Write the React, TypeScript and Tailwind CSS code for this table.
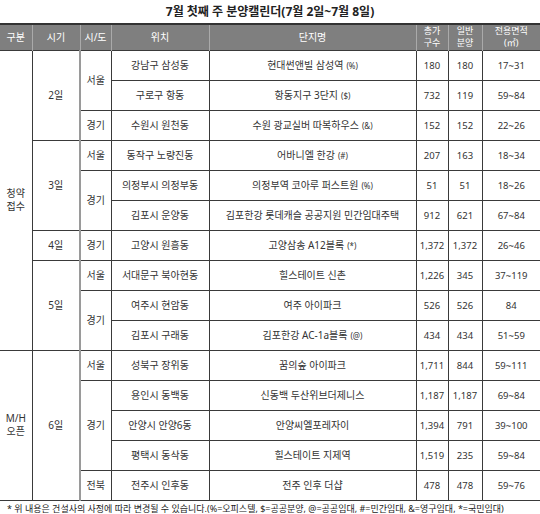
import React from 'react';

type Span = [string, number];

type Row = {
  g?: Span;
  d?: Span;
  r?: Span;
  loc: string;
  name: string;
  mark?: string;
  total: string;
  sale: string;
  area: string;
};

const rows: Row[] = [
  { g: ['청약|접수', 10], d: ['2일', 3], r: ['서울', 2], loc: '강남구 삼성동', name: '현대썬앤빌 삼성역', mark: '(%)', total: '180', sale: '180', area: '17~31' },
  { loc: '구로구 항동', name: '항동지구 3단지', mark: '($)', total: '732', sale: '119', area: '59~84' },
  { r: ['경기', 1], loc: '수원시 원천동', name: '수원 광교실버 따복하우스', mark: '(&)', total: '152', sale: '152', area: '22~26' },
  { d: ['3일', 3], r: ['서울', 1], loc: '동작구 노량진동', name: '어바니엘 한강', mark: '(#)', total: '207', sale: '163', area: '18~34' },
  { r: ['경기', 2], loc: '의정부시 의정부동', name: '의정부역 코아루 퍼스트원', mark: '(%)', total: '51', sale: '51', area: '18~26' },
  { loc: '김포시 운양동', name: '김포한강 롯데캐슬 공공지원 민간임대주택', total: '912', sale: '621', area: '67~84' },
  { d: ['4일', 1], r: ['경기', 1], loc: '고양시 원흥동', name: '고양삼송 A12블록', mark: '(*)', total: '1,372', sale: '1,372', area: '26~46' },
  { d: ['5일', 3], r: ['서울', 1], loc: '서대문구 북아현동', name: '힐스테이트 신촌', total: '1,226', sale: '345', area: '37~119' },
  { r: ['경기', 2], loc: '여주시 현암동', name: '여주 아이파크', total: '526', sale: '526', area: '84' },
  { loc: '김포시 구래동', name: '김포한강 AC-1a블록', mark: '(@)', total: '434', sale: '434', area: '51~59' },
  { g: ['M/H|오픈', 5], d: ['6일', 5], r: ['서울', 1], loc: '성북구 장위동', name: '꿈의숲 아이파크', total: '1,711', sale: '844', area: '59~111' },
  { r: ['경기', 3], loc: '용인시 동백동', name: '신동백 두산위브더제니스', total: '1,187', sale: '1,187', area: '69~84' },
  { loc: '안양시 안양6동', name: '안양씨엘포레자이', total: '1,394', sale: '791', area: '39~100' },
  { loc: '평택시 동삭동', name: '힐스테이트 지제역', total: '1,519', sale: '235', area: '59~84' },
  { r: ['전북', 1], loc: '전주시 인후동', name: '전주 인후 더샵', total: '478', sale: '478', area: '59~76' },
];

const cell = 'border border-[#3a3a3a] text-center align-middle p-0';

const Lines: React.FC<{ text: string }> = ({ text }) => (
  <>
    {text.split('|').map((t) => (
      <div key={t}>{t}</div>
    ))}
  </>
);

export default function App() {
  return (
    <div
      className="w-[540px] h-[514px] bg-white text-[#333] overflow-hidden"
      style={{ fontFamily: '"Noto Sans", "Noto Sans CJK KR", sans-serif' }}
    >
      <div className="h-[23px] flex items-center justify-center text-[12px] font-bold text-[#222] pt-[1px]">
        7월 첫째 주 분양캘린더(7월 2일~7월 8일)
      </div>

      <table className="w-[540px] table-fixed border-collapse text-[10px] leading-[13px]">
        <colgroup>
          <col className="w-[32px]" />
          <col className="w-[48px]" />
          <col className="w-[31px]" />
          <col className="w-[98px]" />
          <col className="w-[207px]" />
          <col className="w-[32px]" />
          <col className="w-[34px]" />
          <col className="w-[58px]" />
        </colgroup>
        <thead>
          <tr className="h-[26px] bg-[#7f7f7f] text-white border-t-2 border-b border-t-[#333] border-b-[#333]">
            <th className="font-normal border-l-0 border-r border-[#aaa]">구분</th>
            <th className="font-normal border-x border-[#aaa]">시기</th>
            <th className="font-normal border-x border-[#aaa]">시/도</th>
            <th className="font-normal border-x border-[#aaa]">위치</th>
            <th className="font-normal border-x border-[#aaa]">단지명</th>
            <th className="font-normal border-x border-[#aaa] text-[9px] leading-[12px]">
              <Lines text="총가|구수" />
            </th>
            <th className="font-normal border-x border-[#aaa] text-[9px] leading-[12px]">
              <Lines text="일반|분양" />
            </th>
            <th className="font-normal border-l border-r-0 border-[#aaa] text-[9px] leading-[12px]">
              <Lines text="전용면적|(㎡)" />
            </th>
          </tr>
        </thead>
        <tbody>
          {rows.map((row) => (
            <tr key={row.loc} className="h-[30px]">
              {row.g && (
                <td rowSpan={row.g[1]} className={`${cell} border-l-0`}>
                  <Lines text={row.g[0]} />
                </td>
              )}
              {row.d && (
                <td rowSpan={row.d[1]} className={`${cell} border-r-[#9a9a9a] border-r-2`}>
                  {row.d[0]}
                </td>
              )}
              {row.r && (
                <td rowSpan={row.r[1]} className={`${cell} border-l-[#9a9a9a] border-l-2`}>
                  {row.r[0]}
                </td>
              )}
              <td className={cell}>{row.loc}</td>
              <td className={cell}>
                {row.name}
                {row.mark && <span className="text-[8px] ml-[3px]">{row.mark}</span>}
              </td>
              <td className={`${cell} text-[9.5px]`}>{row.total}</td>
              <td className={`${cell} text-[9.5px]`}>{row.sale}</td>
              <td className={`${cell} border-r-0 text-[9.5px]`}>{row.area}</td>
            </tr>
          ))}
        </tbody>
      </table>

      <div className="pl-[7px] pt-[1px] text-[9px] text-[#222] whitespace-nowrap">
        * 위 내용은 건설사의 사정에 따라 변경될 수 있습니다.(%=오피스텔, $=공공분양, @=공공임대, #=민간임대, &amp;=영구임대, *=국민임대)
      </div>
    </div>
  );
}
